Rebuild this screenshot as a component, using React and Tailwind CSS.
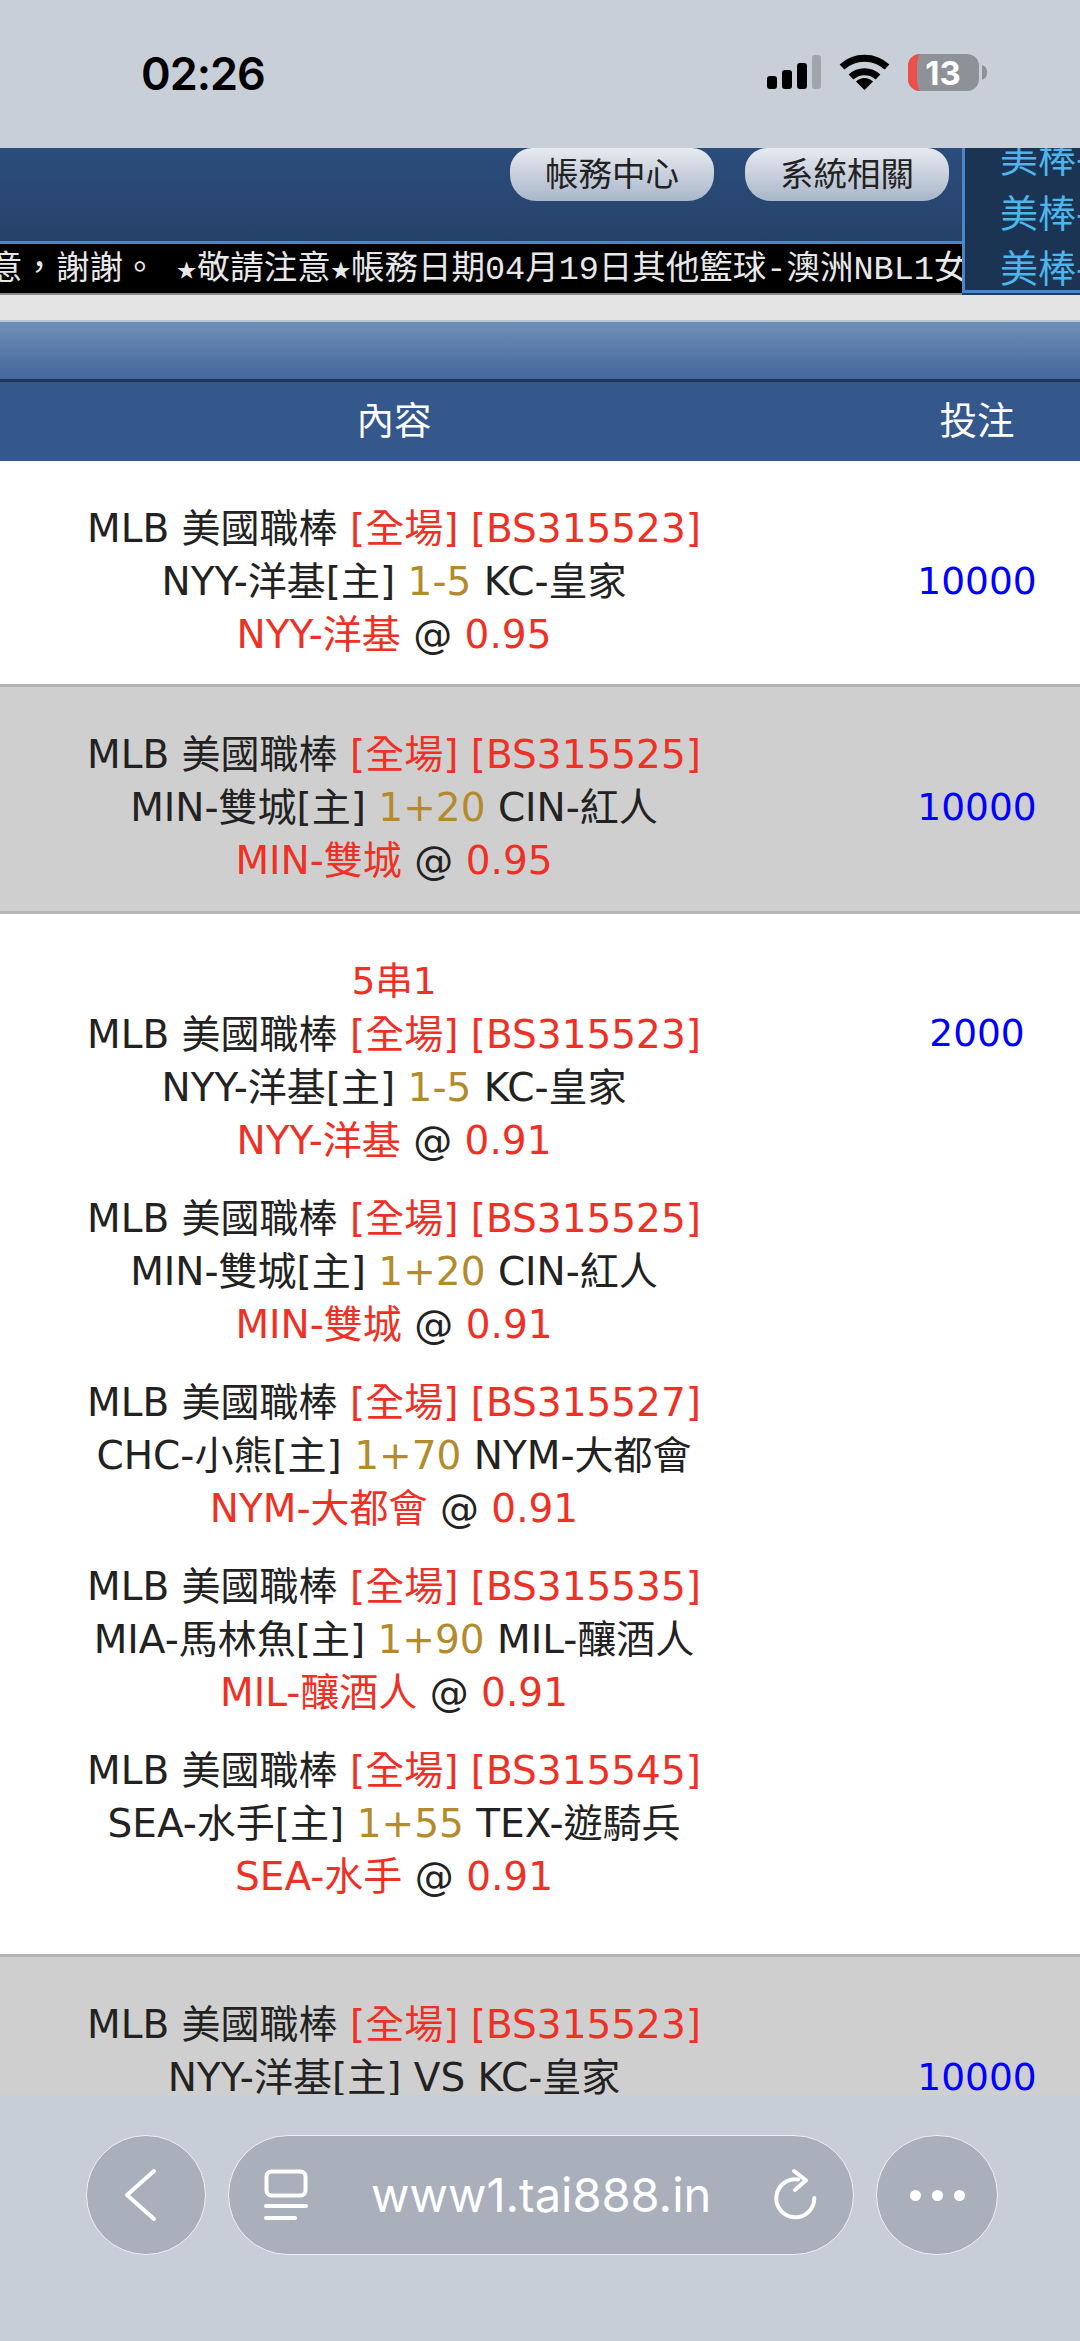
const font = "font-['DejaVu_Sans','Noto_Sans_CJK_TC',sans-serif]";

const Red = ({ children }) => <span className="text-[#ee3124]">{children}</span>;
const Gold = ({ children }) => <span className="text-[#b38b2d]">{children}</span>;

const games = {
  nyy: { code: 'BS315523', home: 'NYY-洋基', away: 'KC-皇家', line: '1-5', pick: 'NYY-洋基' },
  min: { code: 'BS315525', home: 'MIN-雙城', away: 'CIN-紅人', line: '1+20', pick: 'MIN-雙城' },
  chc: { code: 'BS315527', home: 'CHC-小熊', away: 'NYM-大都會', line: '1+70', pick: 'NYM-大都會' },
  mia: { code: 'BS315535', home: 'MIA-馬林魚', away: 'MIL-釀酒人', line: '1+90', pick: 'MIL-釀酒人' },
  sea: { code: 'BS315545', home: 'SEA-水手', away: 'TEX-遊騎兵', line: '1+55', pick: 'SEA-水手' },
};

const Bet = ({ game, odds }) => (
  <div>
    <div>MLB 美國職棒 <Red>[全場] [{game.code}]</Red></div>
    <div>{game.home}[主] <Gold>{game.line}</Gold> {game.away}</div>
    <div><Red>{game.pick}</Red> @ <Red>{odds}</Red></div>
  </div>
);

const Row = ({ gray, stake, children, className = '' }) => (
  <div className={`flex items-center border-b-[3px] border-[#b4b4b4] text-[#222] pt-[17px] ${gray ? 'bg-[#cfcfcf]' : 'bg-white'} ${className}`}>
    <div className="w-[788px] text-center leading-[53px]">{children}</div>
    <div className="ml-auto w-[206px] text-center text-[37.5px] text-[#0000ff]">{stake}</div>
  </div>
);

const StatusBar = () => (
  <div className="h-[148px] bg-[#c8cfd8] flex items-start shrink-0">
    <div className="ml-[141px] mt-[48px] text-[45px] leading-[52px] font-semibold text-black font-['Inter',sans-serif] tracking-[-1px]">02:26</div>
    <svg className="ml-auto mr-[92px] mt-[50px]" width="221" height="46" viewBox="0 0 221 46">
      <rect x="0" y="26" width="10" height="13" rx="3" fill="#000" />
      <rect x="15" y="20" width="10" height="19" rx="3" fill="#000" />
      <rect x="30" y="13" width="10" height="26" rx="3" fill="#000" />
      <rect x="45" y="5" width="9" height="34" rx="3" fill="#a0a5ac" />
      <g fill="none" stroke="#000" strokeWidth="7">
        <path d="M75 17 A33 33 0 0 1 120 17" />
        <path d="M84 27 A20 20 0 0 1 111 27" />
      </g>
      <path d="M97.5 40 L89 31.5 A12 12 0 0 1 106 31.5 Z" fill="#000" />
      <rect x="141" y="4" width="71" height="37" rx="12" fill="#8e9198" />
      <path d="M153 4 A12 12 0 0 0 141 16 V29 A12 12 0 0 0 153 41 A14 18 0 0 1 150 29 V16 A14 18 0 0 1 153 4 Z" fill="#ec4f49" />
      <path d="M215 15 A8 8 0 0 1 215 30 Z" fill="#8e9198" />
      <text x="176" y="35" textAnchor="middle" fontSize="33" fontWeight="700" fill="#fff" fontFamily="Inter, sans-serif">13</text>
    </svg>
  </div>
);

const Header = () => (
  <div className="shrink-0 relative h-[147px] bg-gradient-to-b from-[#2b4d7c] to-[#233c60] flex flex-col">
    <div className="flex h-[93px] pl-[510px] gap-[31px] font-['Noto_Sans_CJK_TC',sans-serif]">
      {['帳務中心', '系統相關'].map((label) => (
        <div key={label} className="w-[204px] h-[53px] rounded-b-[26px] rounded-t-[22px] bg-gradient-to-b from-[#e8ebf0] to-[#a9b6c9] text-[33.5px] leading-[48px] text-center text-[#222]">
          {label}
        </div>
      ))}
    </div>
    <div className="h-[54px] w-[962px] overflow-hidden border-t-[3px] border-b-[2px] border-t-[#4a86c8] border-b-[#8a8a8a] bg-black text-[#e8e8e8] text-[33.5px] leading-[52px] whitespace-pre font-['Liberation_Mono','DejaVu_Sans_Mono','Noto_Sans_CJK_TC',monospace]">
      <div className="-ml-[11px]">{'意\uFF0C謝謝。 ★敬請注意★帳務日期04月19日其他籃球-澳洲NBL1女'}</div>
    </div>
    {/* scrolling league list on the right, clipped by the top of the page */}
    <div className="absolute left-[962px] right-0 top-0 h-[145px] overflow-hidden bg-[#1c3454] border-l-[3px] border-b-[3px] border-[#4a86c8] pl-[35px] text-[38px] leading-[55px] text-[#4db5ea] font-['Noto_Sans_CJK_TC',sans-serif] whitespace-nowrap">
      <div className="-mt-[20px]">美棒-</div>
      <div>美棒-</div>
      <div>美棒-</div>
    </div>
  </div>
);

const TableHead = () => (
  <div className="shrink-0">
    <div className="h-[25px] bg-[#e4e4e4]" />
    <div className="h-[62px] border-t-2 border-b-[3px] border-t-[#b9c7d8] border-b-[#1d3558] bg-gradient-to-b from-[#6f8fb8] to-[#44689c]" />
    <div className="h-[79px] flex items-center bg-[#35588c] text-white text-[37.5px]">
      <div className="w-[788px] text-center">內容</div>
      <div className="ml-auto w-[206px] text-center">投注</div>
    </div>
  </div>
);

const BottomBar = () => (
  <div className="absolute left-0 right-0 bottom-0 h-[246px] bg-[#c8ced7]">
    <div className="flex mt-[40px] pl-[86px] h-[120px] gap-[22px] text-white">
      <div className="w-[120px] rounded-full bg-[#a9b0bb] border-[1.5px] border-[#eef1f4] flex items-center justify-center">
        <svg className="mr-[10px]" width="36" height="56" viewBox="0 0 36 56" fill="none" stroke="#fff" strokeWidth="4" strokeLinecap="round" strokeLinejoin="round">
          <path d="M31 4 L4 28 L31 52" />
        </svg>
      </div>
      <div className="w-[626px] rounded-full bg-[#a9b0bb] border-[1.5px] border-[#eef1f4] flex items-center pl-[35px] pr-[35px]">
        <svg width="44" height="54" viewBox="0 0 44 54" fill="none" stroke="#fff" strokeWidth="4" strokeLinecap="round">
          <rect x="2.5" y="3.5" width="39" height="24" rx="5" />
          <path d="M2 38 H42" />
          <path d="M2 50 H31" />
        </svg>
        <div className="ml-[63px] text-[47px] font-['Inter',sans-serif]">www1.tai888.in</div>
        <svg className="ml-auto" width="44" height="54" viewBox="0 0 44 54" fill="none" stroke="#fff" strokeWidth="4" strokeLinecap="round" strokeLinejoin="round">
          <path d="M24 11.5 A19 19 0 1 0 40.3 30" />
          <path d="M20 3 L32 12.3 L21 22" />
        </svg>
      </div>
      <div className="w-[122px] rounded-full bg-[#a9b0bb] border-[1.5px] border-[#eef1f4] flex items-center justify-center gap-[11px]">
        <span className="w-[11px] h-[11px] rounded-full bg-white" />
        <span className="w-[11px] h-[11px] rounded-full bg-white" />
        <span className="w-[11px] h-[11px] rounded-full bg-white" />
      </div>
    </div>
  </div>
);

export default function App() {
  return (
    <div className={`relative h-[2341px] w-[1080px] overflow-hidden flex flex-col bg-white text-[39px] ${font}`}>
      <StatusBar />
      <Header />
      <TableHead />
      <Row stake="10000" className="h-[226px] shrink-0"><Bet game={games.nyy} odds="0.95" /></Row>
      <Row gray stake="10000" className="h-[227px] shrink-0"><Bet game={games.min} odds="0.95" /></Row>
      <div className="flex shrink-0 h-[1043px] bg-white border-b-[3px] border-[#b4b4b4] text-[#222] pt-[41px]">
        <div className="w-[788px] text-center leading-[53px]">
          <div className="text-[37.5px]"><Red>5串1</Red></div>
          <div className="flex flex-col gap-[25px]">
            <Bet game={games.nyy} odds="0.91" />
            <Bet game={games.min} odds="0.91" />
            <Bet game={games.chc} odds="0.91" />
            <Bet game={games.mia} odds="0.91" />
            <Bet game={games.sea} odds="0.91" />
          </div>
        </div>
        <div className="ml-auto w-[206px] text-center text-[37.5px] text-[#0000ff] leading-[53px] pt-[52px]">2000</div>
      </div>
      <div className="flex shrink-0 h-[300px] bg-[#cfcfcf] text-[#222] pt-[41px] leading-[53px]">
        <div className="w-[788px] text-center">
          <div>MLB 美國職棒 <Red>[全場] [BS315523]</Red></div>
          <div>NYY-洋基[主] VS KC-皇家</div>
        </div>
        <div className="ml-auto w-[206px] text-center text-[37.5px] text-[#0000ff] pt-[53px]">10000</div>
      </div>
      <BottomBar />
    </div>
  );
}
